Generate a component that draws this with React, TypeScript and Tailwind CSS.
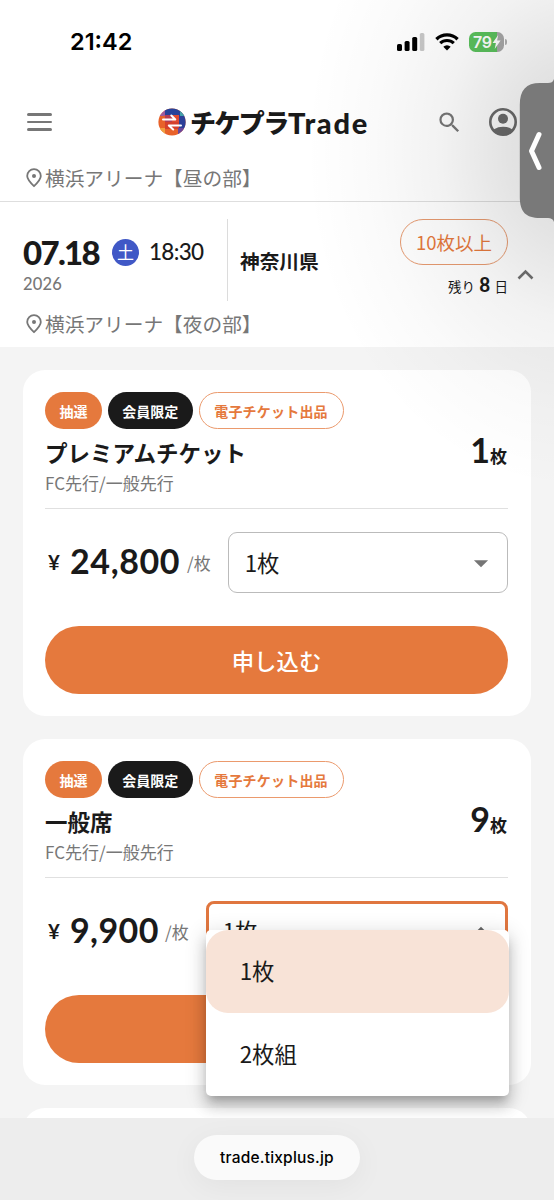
import React from 'react';
import { MdSearch, MdArrowDropDown } from 'react-icons/md';

interface Ticket {
  id: string;
  name: string;
  count: string;
  price: string;
  priceClass: string;
  open: boolean;
}

const tickets: Ticket[] = [
  {
    id: 'premium',
    name: 'プレミアムチケット',
    count: '1',
    price: '24,800',
    priceClass: 'w-[109px] tracking-[0.6px]',
    open: false,
  },
  {
    id: 'general',
    name: '一般席',
    count: '9',
    price: '9,900',
    priceClass: 'w-[87px] tracking-[0.4px]',
    open: true,
  },
];

function StatusBar() {
  return (
    <div className="flex h-[83px] items-center pr-[47px] pl-[70px] font-[Inter,sans-serif]">
      <span className="text-[23.5px] leading-none font-semibold text-black">21:42</span>
      <svg className="ml-auto" width="28" height="18" viewBox="0 0 28 18">
        <rect x="0" y="11" width="5" height="7" rx="1.6" fill="#000" />
        <rect x="7.6" y="8" width="5" height="10" rx="1.6" fill="#000" />
        <rect x="15.2" y="4" width="5" height="14" rx="1.6" fill="#000" />
        <rect x="22.8" y="0" width="4.6" height="18" rx="1.6" fill="#c8c8c8" />
      </svg>
      <svg className="ml-[10px]" width="24" height="18" viewBox="0 0 24 18" fill="none" stroke="#000">
        <path d="M1.4 6.2a15.4 15.4 0 0 1 21.2 0" strokeWidth="3.3" />
        <path d="M5.2 10.2a9.8 9.8 0 0 1 13.6 0" strokeWidth="3.1" />
        <path d="M12 17.6l-3.7-3.8a5.3 5.3 0 0 1 7.4 0z" fill="#000" stroke="none" />
      </svg>
      <div className="ml-[10px] flex items-center">
        <div className="flex h-[20px] w-[35px] items-center rounded-[6.5px] bg-[linear-gradient(90deg,#5bc15d_79%,#a8a8a8_79%)] pl-[4px]">
          <span className="text-[16px] leading-none font-semibold tracking-[-0.3px] text-white">79</span>
          <svg width="9" height="14" viewBox="0 0 9 14" fill="#fff">
            <path d="M6.2 0L.6 8h3.3l-1.2 6L8.6 5.6H5.1z" />
          </svg>
        </div>
        <div className="ml-[1px] h-[6px] w-[2px] rounded-r-full bg-[#b0b0b0]" />
      </div>
    </div>
  );
}

function LogoMark() {
  return (
    <svg width="28" height="28" viewBox="0 0 28 28">
      <defs>
        <clipPath id="mark">
          <circle cx="14" cy="14" r="13.6" />
        </clipPath>
      </defs>
      <g clipPath="url(#mark)">
        <rect width="28" height="28" fill="#e8622a" />
        <rect width="8" height="8" fill="#a05a9c" />
        <rect x="7" width="21" height="8" fill="#27429a" />
        <rect x="20" y="7" width="8" height="14" fill="#2c3f98" />
        <rect x="22" width="6" height="8" fill="#43a0a8" />
        <rect x="7" y="7" width="7" height="7" fill="#b43d55" />
        <rect x="14" y="7" width="7" height="7" fill="#e04a31" />
        <rect x="7" y="14" width="14" height="7" fill="#d5402c" />
        <rect x="0" y="20" width="7" height="8" fill="#f0a040" />
        <rect x="20" y="20" width="8" height="8" fill="#6b479a" />
      </g>
      <path
        d="M5 11.5h12.3l-4-4M23 17.5H10.8l4.4 4"
        fill="none"
        stroke="#fff"
        strokeWidth="2"
        strokeLinecap="round"
        strokeLinejoin="round"
      />
    </svg>
  );
}

function Header() {
  return (
    <header className="flex h-[78px] items-center pr-[37px] pl-[27px]">
      <div className="flex w-[25px] flex-col gap-[5px]">
        <div className="h-[2.4px] rounded-full bg-[#777]" />
        <div className="h-[2.4px] rounded-full bg-[#777]" />
        <div className="h-[2.4px] rounded-full bg-[#777]" />
      </div>
      <div className="ml-[106px] flex items-center text-[#1a1a1a]">
        <LogoMark />
        <span className="ml-[4px] w-[98px] text-[26px] leading-[30px] font-black tracking-[-1.6px] whitespace-nowrap">
          チケプラ
        </span>
        <span className="mt-[1px] font-[Lato,sans-serif] text-[29px] leading-[30px] font-black tracking-[1.7px]">
          Trade
        </span>
      </div>
      <MdSearch className="ml-auto text-[#777]" size={27} />
      <svg className="ml-[26px]" width="28" height="28" viewBox="0 0 28 28">
        <defs>
          <clipPath id="avatar">
            <circle cx="14" cy="14" r="13" />
          </clipPath>
        </defs>
        <circle cx="14" cy="14" r="12.7" fill="none" stroke="#6c6c6c" strokeWidth="2.6" />
        <circle cx="14" cy="10.8" r="5" fill="#6c6c6c" />
        <ellipse cx="14" cy="26.2" rx="12" ry="7.5" fill="#6c6c6c" clipPath="url(#avatar)" />
      </svg>
    </header>
  );
}

function Venue({ name }: { name: string }) {
  return (
    <div className="flex items-center pl-[26px] text-[#777]">
      <svg width="16" height="20" viewBox="0 0 16 20" fill="none">
        <path
          d="M8 18.2C4 14.3 1.2 11.2 1.2 8a6.8 6.8 0 0 1 13.6 0C14.8 11.2 12 14.3 8 18.2z"
          stroke="#777"
          strokeWidth="1.8"
          strokeLinejoin="round"
        />
        <circle cx="8" cy="8" r="2" fill="#777" />
      </svg>
      <span className="ml-[3px] text-[19.7px] leading-[28px]">{name}</span>
    </div>
  );
}

function EventRow() {
  return (
    <section className="h-[146px] border-t border-[#dedede]">
      <div className="flex h-[108px] pt-[17px] pl-[23px]">
        <div className="w-[204px] pt-[14px]">
          <div className="flex h-[38px] items-center">
            <span className="w-[78px] font-[Lato,sans-serif] text-[33px] leading-none font-black tracking-[-1.7px] text-[#1a1a1a]">
              07.18
            </span>
            <span className="ml-[11px] flex size-[27px] items-center justify-center rounded-full bg-[#4058c6] pb-px text-[17px] leading-none text-white">
              土
            </span>
            <span className="ml-[10px] font-[Lato,sans-serif] text-[22.5px] leading-none font-medium tracking-[-0.7px] text-[#1a1a1a]">
              18:30
            </span>
          </div>
          <div className="mt-[3px] font-[Lato,sans-serif] text-[16.5px] leading-[20px] font-medium tracking-[0.2px] text-[#777]">
            2026
          </div>
        </div>
        <div className="h-[82px] w-px bg-[#dcdcdc]" />
        <div className="ml-[12px] pt-[28px] text-[19.7px] leading-[28px] font-bold text-[#1a1a1a]">神奈川県</div>
        <div className="ml-auto flex flex-col items-end">
          <div className="flex h-[46px] w-[108px] items-center justify-center rounded-full border-[1.5px] border-[#e69a70] text-[18.5px] leading-none text-[#e5793d]">
            10枚以上
          </div>
          <div className="mt-[9px] flex h-[22px] items-baseline text-[13.5px] leading-[22px] text-[#1a1a1a]">
            残り
            <span className="mx-[4px] font-[Roboto,sans-serif] text-[20px] font-semibold">8</span>
            日
          </div>
        </div>
        <svg className="mt-[49px] mr-[20px] ml-[9px]" width="17" height="12" viewBox="0 0 17 12">
          <path d="M1.5 10.5l7-7 7 7" fill="none" stroke="#707070" strokeWidth="2.6" />
        </svg>
      </div>
      <Venue name="横浜アリーナ【夜の部】" />
    </section>
  );
}

function QuantityMenu() {
  return (
    <div className="absolute top-[26px] -left-[3px] z-10 h-[166px] w-[303px] rounded-[5px] bg-white text-[22.4px] text-[#1a1a1a] shadow-[0_7px_8px_-4px_rgba(0,0,0,0.2),0_11px_14px_1px_rgba(0,0,0,0.14),0_4px_20px_3px_rgba(0,0,0,0.12)]">
      <div className="flex h-[83px] items-center rounded-[22px] bg-[#f8e3d7] pl-[34px]">1枚</div>
      <div className="flex h-[83px] items-center pl-[34px]">2枚組</div>
    </div>
  );
}

function QuantitySelect({ open }: { open: boolean }) {
  if (open) {
    return (
      <div className="relative -mt-px ml-[17px] flex h-[61px] flex-1 items-center rounded-[8px] border-[3px] border-[#e0763f] pr-[7px] pl-[14px] text-[22.4px]">
        1枚
        <MdArrowDropDown className="ml-auto rotate-180 text-[#666]" size={34} />
        <QuantityMenu />
      </div>
    );
  }
  return (
    <div className="ml-[17px] flex h-[61px] flex-1 items-center rounded-[9px] border-[1.5px] border-[#bbb] pr-[9px] pl-[16px] text-[22.4px]">
      1枚
      <MdArrowDropDown className="ml-auto text-[#757575]" size={34} />
    </div>
  );
}

function TicketCard({ ticket }: { ticket: Ticket }) {
  return (
    <article className="h-[346px] shrink-0 rounded-[22px] bg-white px-[22px] pt-[22px] pr-[23px] text-[#1a1a1a]">
      <div className="flex h-[37px] gap-[5.5px] text-[14px] leading-none font-bold">
        <span className="flex w-[57px] items-center justify-center rounded-full bg-[#e5793d] text-white">抽選</span>
        <span className="flex w-[85.5px] items-center justify-center rounded-full bg-[#1a1a1a] text-white">
          会員限定
        </span>
        <span className="flex w-[145px] items-center justify-center rounded-full border-[1.5px] border-[#eb9a6d] text-[#e5793d]">
          <span className="tracking-[0.2px]">電子チケット出品</span>
        </span>
      </div>
      <div className="flex h-[80px] justify-between border-b-[1.5px] border-[#e0e0e0]">
        <div>
          <h2 className="pt-[7px] text-[22.5px] leading-[32px] font-bold">{ticket.name}</h2>
          <p className="mt-[3px] text-[17px] leading-[24px] text-[#777]">FC先行/一般先行</p>
        </div>
        <div className="flex items-baseline pt-[3px] pr-px font-bold">
          <span className="font-[Lato,sans-serif] text-[34px] leading-[36px]">{ticket.count}</span>
          <span className="text-[17px] leading-[24px]">枚</span>
        </div>
      </div>
      <div className="mt-[23px] flex h-[61px] items-center">
        <span className="w-[25px] pl-[3px] font-[Lato,sans-serif] text-[20.5px] leading-none font-bold">¥</span>
        <span
          className={`pb-[3px] font-[Lato,sans-serif] text-[34px] leading-none font-bold whitespace-nowrap ${ticket.priceClass}`}
        >
          {ticket.price}
        </span>
        <span className="ml-[8px] text-[17px] leading-none text-[#777]">/枚</span>
        <QuantitySelect open={ticket.open} />
      </div>
      {/* The open menu covers the label */}
      <button className="mt-[33px] block h-[68px] w-full rounded-full bg-[#e5793d] pt-[2px] text-[22.4px] font-medium text-white">
        {!ticket.open && '申し込む'}
      </button>
    </article>
  );
}

function BrowserBar() {
  return (
    <footer className="relative flex h-[82px] justify-center bg-[#ededed] pt-[17px]">
      <div className="flex h-[45px] w-[166px] items-center justify-center rounded-full bg-[#fafafa] pt-px font-[Inter,sans-serif] text-[15.5px] font-medium tracking-[0.2px] text-black shadow-[0_6px_30px_rgba(0,0,0,0.05)]">
        trade.tixplus.jp
      </div>
    </footer>
  );
}

function SideHandle() {
  return (
    <div className="pointer-events-none absolute inset-0 z-20 bg-[radial-gradient(ellipse_270px_340px_at_575px_150px,rgba(0,0,0,0.15)_0%,rgba(0,0,0,0.11)_25%,rgba(0,0,0,0.05)_50%,rgba(0,0,0,0.018)_75%,transparent_100%)]">
      <svg className="absolute top-[78px] right-0" width="35" height="146" viewBox="0 0 35 146">
        <path
          d="M35 1c-1 3-3 4-6 4h-8C7 5 .8 12 .8 27v92c0 15 6.2 21 20.2 21h8c3 0 5 1 6 4z"
          fill="#797979"
        />
        <path
          d="M20 56.500l-7.500 16.500 7.500 16.500"
          fill="none"
          stroke="#fff"
          strokeWidth="5"
          strokeLinecap="round"
          strokeLinejoin="round"
        />
      </svg>
    </div>
  );
}

export default function App() {
  return (
    <div className="relative flex h-[1200px] w-[554px] flex-col overflow-hidden bg-[#f4f4f4] font-['Noto_Sans_CJK_JP',sans-serif]">
      <div className="shrink-0 bg-white">
        <StatusBar />
        <Header />
        <div className="h-[40px] pt-[3px]">
          <Venue name="横浜アリーナ【昼の部】" />
        </div>
        <EventRow />
      </div>
      <main className="flex h-[771px] shrink-0 flex-col gap-[23px] overflow-hidden px-[23px] pt-[23px]">
        {tickets.map((ticket) => (
          <TicketCard key={ticket.id} ticket={ticket} />
        ))}
        <div className="h-[60px] shrink-0 rounded-[22px] bg-white" />
      </main>
      <BrowserBar />
      <SideHandle />
    </div>
  );
}
